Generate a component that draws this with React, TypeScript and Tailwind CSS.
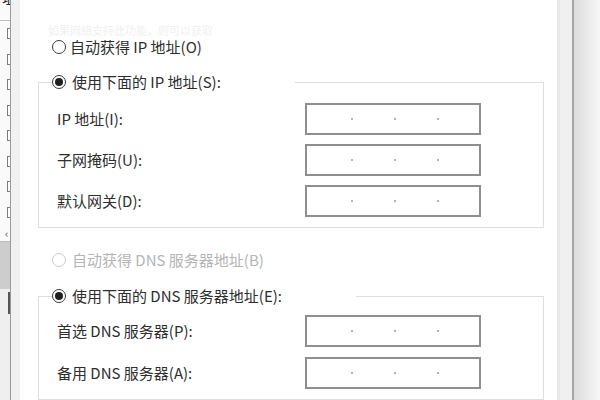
import React from "react";

const FONT = { fontFamily: '"Noto Sans CJK SC", "Noto Sans", sans-serif' };

function Radio({ checked, disabled }: { checked?: boolean; disabled?: boolean }) {
  return (
    <span
      className={`inline-flex h-[14px] w-[14px] shrink-0 items-center justify-center rounded-full border bg-white ${
        disabled ? "border-[#c9c9c9]" : "border-[#3a3a3a]"
      }`}
    >
      {checked && <span className="h-[8px] w-[8px] rounded-full bg-[#1f1f1f]" />}
    </span>
  );
}

function IpInput() {
  return (
    <div className="flex h-[32px] w-[176px] items-center gap-[41px] border-2 border-[#8e8e8e] bg-white pl-[44px]">
      <span className="h-[2px] w-[2px] rounded-full bg-[#9a9a9a]" />
      <span className="h-[2px] w-[2px] rounded-full bg-[#9a9a9a]" />
      <span className="h-[2px] w-[2px] rounded-full bg-[#9a9a9a]" />
    </div>
  );
}

function Row({ label }: { label: string }) {
  return (
    <div className="flex items-center">
      <div className="w-[248px] text-[15px] leading-[20px] text-[#2e2e2e]">{label}</div>
      <IpInput />
    </div>
  );
}

function LeftStrip() {
  const rows = [true, true, true, true, false, true, true, true];
  return (
    <div className="flex w-[10px] shrink-0 flex-col overflow-hidden bg-[#fafafa]">
      <div className="h-[21px] border-b border-[#bdbdbd] overflow-hidden">
        <div className="-mt-[10px] ml-[2px] text-[14px] leading-[16px] text-[#222] whitespace-nowrap">址</div>
      </div>
      {rows.map((c, i) => (
        <div key={i} className="flex h-[25.5px] items-center">
          <div className="ml-[7px] flex h-[11px] w-[11px] shrink-0 items-center justify-center border border-[#7c7c7c] bg-white">
            {c && <div className="h-[5px] w-[4px] bg-[#222]" />}
          </div>
        </div>
      ))}
      <div className="flex h-[17px] items-center border-b border-[#bdbdbd] pl-[5px] text-[11px] leading-none text-[#555]">
        ‹
      </div>
      <div className="h-[47px] bg-[#cdcdcd]" />
      <div className="flex-1 bg-[#efefef]">
        <div className="ml-[8px] mt-[3px] h-[22px] w-[2px] bg-[#555]" />
      </div>
    </div>
  );
}

export default function App() {
  return (
    <div className="flex h-[400px] w-[600px] overflow-hidden bg-white" style={FONT}>
      <LeftStrip />
      <div className="w-[1px] shrink-0 bg-[#9a9a9a]" />
      <div className="w-[9px] shrink-0 bg-[#f1f1f1]" />
      {/* main white dialog area */}
      <div className="flex w-[537px] shrink-0 flex-col bg-white">
        <div className="h-[37px] pt-[24px]">
          <div className="ml-[28px] text-[11px] leading-[12px] text-[#f0f0f0] whitespace-nowrap">
            如果网络支持此功能，则可以获取
          </div>
        </div>
        <div className="ml-[32px] flex h-[20px] items-center gap-[4px] text-[15px] leading-[20px] text-[#2e2e2e]">
          <Radio />
          <span>自动获得 IP 地址(O)</span>
        </div>

        <fieldset className="ml-[18px] mt-[15px] w-[506px] border border-[#dedede] pb-[10px] pl-[18px]">
          <legend className="-ml-[5px] flex h-[20px] items-center gap-[6px] pr-[74px] text-[15px] leading-[20px] text-[#2e2e2e]">
            <Radio checked />
            <span>使用下面的 IP 地址(S):</span>
          </legend>
          <div className="mt-[11px] flex flex-col gap-[9px]">
            <Row label="IP 地址(I):" />
            <Row label="子网掩码(U):" />
            <Row label="默认网关(D):" />
          </div>
        </fieldset>

        <div className="ml-[32px] mt-[22px] flex h-[20px] items-center gap-[6px] text-[15px] leading-[20px] text-[#b4b4b4]">
          <Radio disabled />
          <span>自动获得 DNS 服务器地址(B)</span>
        </div>

        <fieldset className="ml-[18px] mt-[16px] w-[506px] border border-[#dedede] pb-[10px] pl-[18px]">
          <legend className="-ml-[5px] flex h-[20px] items-center gap-[6px] pr-[74px] text-[15px] leading-[20px] text-[#2e2e2e]">
            <Radio checked />
            <span>使用下面的 DNS 服务器地址(E):</span>
          </legend>
          <div className="mt-[9px] flex flex-col gap-[10px]">
            <Row label="首选 DNS 服务器(P):" />
            <Row label="备用 DNS 服务器(A):" />
          </div>
        </fieldset>
      </div>
      {/* right frame */}
      <div className="w-[3px] shrink-0 bg-[#e8e8e8]" />
      <div className="w-[12px] shrink-0 bg-[#f0f0f0]" />
      <div className="w-[2px] shrink-0 bg-[#a6a6a6]" />
      <div className="flex-1 bg-gradient-to-r from-[#dcdcdc] to-[#f7f7f7]" />
    </div>
  );
}
